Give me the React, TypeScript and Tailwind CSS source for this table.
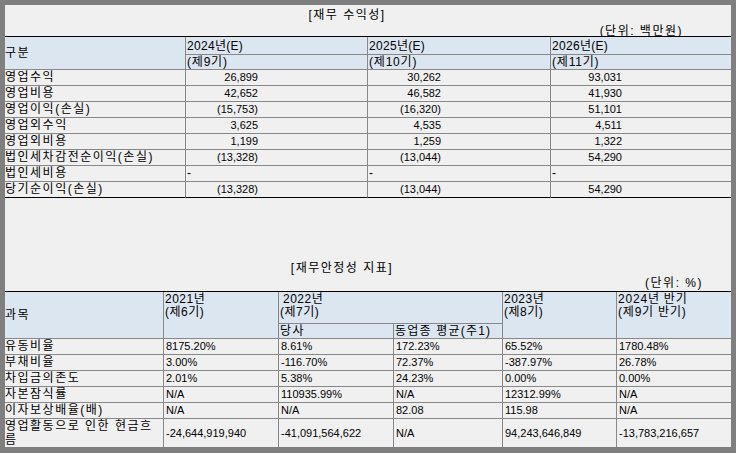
import React from "react";

const FONT = { fontFamily: '"Liberation Sans", "Noto Sans CJK KR", sans-serif' };

const rows1: string[][] = [
  ["영업수익", "26,899", "30,262", "93,031"],
  ["영업비용", "42,652", "46,582", "41,930"],
  ["영업이익(손실)", "(15,753)", "(16,320)", "51,101"],
  ["영업외수익", "3,625", "4,535", "4,511"],
  ["영업외비용", "1,199", "1,259", "1,322"],
  ["법인세차감전순이익(손실)", "(13,328)", "(13,044)", "54,290"],
  ["법인세비용", "-", "-", "-"],
  ["당기순이익(손실)", "(13,328)", "(13,044)", "54,290"],
];

const rows2: string[][] = [
  ["유동비율", "8175.20%", "8.61%", "172.23%", "65.52%", "1780.48%"],
  ["부채비율", "3.00%", "-116.70%", "72.37%", "-387.97%", "26.78%"],
  ["차입금의존도", "2.01%", "5.38%", "24.23%", "0.00%", "0.00%"],
  ["자본잠식률", "N/A", "110935.99%", "N/A", "12312.99%", "N/A"],
  ["이자보상배율(배)", "N/A", "N/A", "82.08", "115.98", "N/A"],
];

function Table1() {
  return (
    <div className="grid grid-cols-[181px_182px_183px_180px] grid-rows-[18px_15px_repeat(8,16px)] border-t border-black">
      <div className="row-span-2 col-start-1 row-start-1 flex items-center border-r border-b border-[#888] bg-[#dce6f1] text-[12px] tracking-[1.5px]">
        구분
      </div>
      {["2024년(E)", "2025년(E)", "2026년(E)"].map((t, i) => (
        <div
          key={t}
          className={`row-start-1 flex items-center border-b border-[#888] bg-[#dce6f1] pl-[1px] text-[12px] leading-[14px] tracking-[0.3px] ${
            i < 2 ? "border-r" : ""
          }`}
        >
          {t}
        </div>
      ))}
      {["(제9기)", "(제10기)", "(제11기)"].map((t, i) => (
        <div
          key={t}
          className={`row-start-2 flex items-center border-b border-[#888] bg-[#dce6f1] pl-[1px] text-[12px] leading-[14px] tracking-[0.8px] ${
            i < 2 ? "border-r" : ""
          }`}
        >
          {t}
        </div>
      ))}
      {rows1.map((r, ri) => {
        const last = ri === rows1.length - 1;
        const bb = last ? "border-b border-b-black" : "border-b border-b-[#888]";
        return (
          <React.Fragment key={ri}>
            <div className={`flex items-center border-r border-r-[#888] text-[12px] leading-[15px] tracking-[1.5px] ${bb}`}>
              {r[0]}
            </div>
            {r.slice(1).map((v, ci) => (
              <div
                key={ci}
                className={`flex items-center leading-[15px] ${bb} ${ci < 2 ? "border-r border-r-[#888]" : ""} ${
                  v === "-" ? "justify-start pl-[1px] text-[12px]" : "justify-end pr-[109px] text-[11px]"
                }`}
              >
                {v}
              </div>
            ))}
          </React.Fragment>
        );
      })}
    </div>
  );
}

function Table2() {
  const hdr = "bg-[#dce6f1] border-[#888] text-[12px] leading-[13px]";
  return (
    <div className="grid grid-cols-[159px_115px_115px_109px_114px_114px] grid-rows-[32px_15px_repeat(5,16px)_28px] border-t border-black">
      <div className={`col-start-1 row-start-1 row-span-2 flex items-center border-r border-b tracking-[1.5px] ${hdr}`}>
        과목
      </div>
      <div className={`col-start-2 row-start-1 row-span-2 border-r border-b pl-[1px] pt-[1px] tracking-[0.5px] ${hdr}`}>
        <div>2021년</div>
        <div>(제6기)</div>
      </div>
      <div className={`col-start-3 col-span-2 row-start-1 border-r border-b pl-[1px] pt-[1px] tracking-[0.5px] ${hdr}`}>
        <div className="pl-[3px]">2022년</div>
        <div>(제7기)</div>
      </div>
      <div className={`col-start-5 row-start-1 row-span-2 border-r border-b pl-[1px] pt-[1px] tracking-[0.5px] ${hdr}`}>
        <div>2023년</div>
        <div>(제8기)</div>
      </div>
      <div className={`col-start-6 row-start-1 row-span-2 border-b pl-[1px] pt-[1px] tracking-[0.8px] ${hdr}`}>
        <div>2024년 반기</div>
        <div>(제9기 반기)</div>
      </div>
      <div className={`col-start-3 row-start-2 flex items-center border-r border-b pl-[1px] tracking-[1.5px] ${hdr}`}>
        당사
      </div>
      <div className={`col-start-4 row-start-2 flex items-center border-r border-b pl-[1px] tracking-[1.2px] ${hdr}`}>
        동업종 평균(주1)
      </div>
      {rows2.map((r, ri) => (
        <React.Fragment key={ri}>
          {r.map((v, ci) => (
            <div
              key={ci}
              className={`flex items-center border-b border-[#888] leading-[15px] ${ci < 5 ? "border-r" : ""} ${
                ci === 0 ? "text-[12px] tracking-[1.5px]" : "pl-[2px] text-[11px]"
              }`}
            >
              {v}
            </div>
          ))}
        </React.Fragment>
      ))}
      <div className="flex items-center border-r border-[#888] text-[12px] leading-[14px] tracking-[1.5px]">
        <div className="whitespace-nowrap">
          영업활동으로 인한 현금흐
          <br />름
        </div>
      </div>
      {["-24,644,919,940", "-41,091,564,622", "N/A", "94,243,646,849", "-13,783,216,657"].map((v, ci) => (
        <div
          key={ci}
          className={`flex items-center border-[#888] pl-[2px] text-[11px] leading-[15px] ${ci < 4 ? "border-r" : ""}`}
        >
          {v}
        </div>
      ))}
    </div>
  );
}

export default function App() {
  return (
    <div className="h-[453px] w-[736px] bg-[#7f7f7f] pt-[5px] pl-[5px] pr-[5px] pb-[6px]" style={FONT}>
      <div className="flex h-full w-full flex-col bg-[#f0f0f0] text-black">
        <div className="h-[18px] pr-[42px] text-center text-[12px] leading-[20px] tracking-[1.5px]">[재무 수익성]</div>
        <div className="h-[13px] pr-[48px] text-right text-[12px] leading-[16px] tracking-[1.5px]">(단위: 백만원)</div>
        <Table1 />
        <div className="mt-[60px] h-[20px] pr-[52px] text-center text-[12px] leading-[20px] tracking-[1.5px]">
          [재무안정성 지표]
        </div>
        <div className="h-[13px] pr-[28px] text-right text-[12px] leading-[10px] tracking-[1.5px]">(단위: %)</div>
        <Table2 />
      </div>
    </div>
  );
}
